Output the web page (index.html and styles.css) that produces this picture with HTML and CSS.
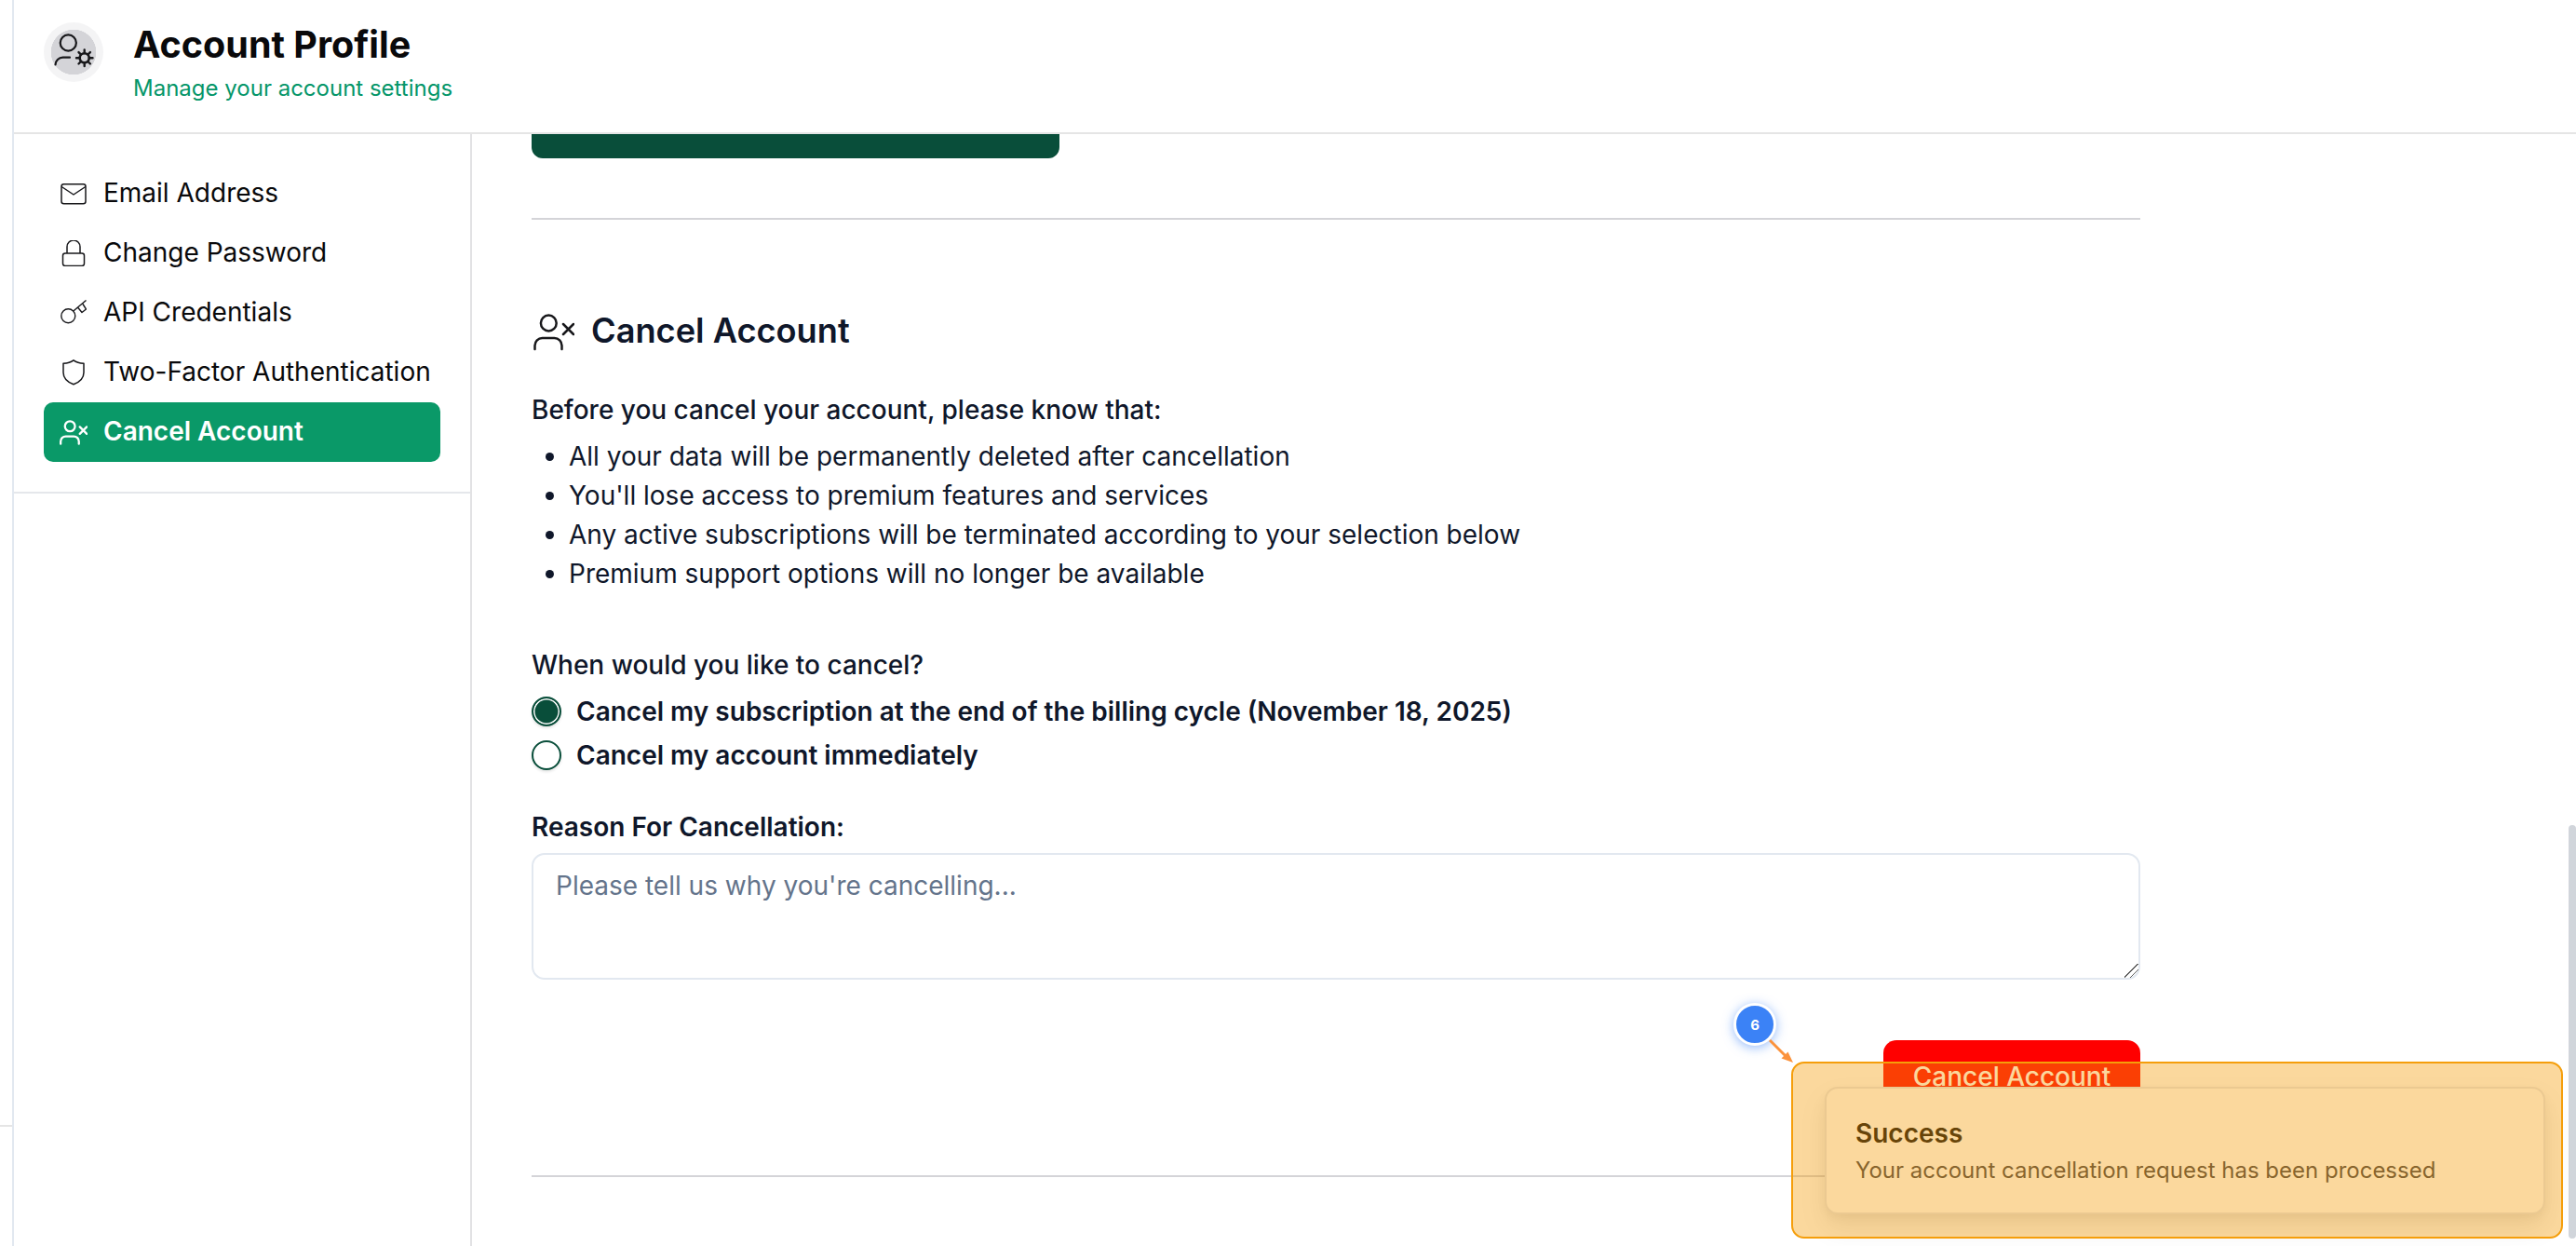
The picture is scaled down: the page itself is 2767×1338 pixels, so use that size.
FILE: index.html
```html
<!DOCTYPE html>
<html lang="en">
<head>
<meta charset="utf-8">
<title>Account Profile</title>
<link rel="stylesheet" href="styles.css">
</head>
<body>
<div class="page">
  <div class="rail"><div class="rail-line"></div></div>
  <div class="panel">
    <header class="header">
      <div class="avatar">
        <svg class="avatar-icon" viewBox="0 0 64 64" fill="none" stroke="#18181b" stroke-width="2.2" stroke-linecap="round">
          <circle cx="26.3" cy="22" r="8.6"/>
          <path d="M12.5 45.5a8 8 0 0 1 8-7.8H28"/>
          <circle cx="43.7" cy="38.3" r="5" stroke-width="2.6"/>
          <path d="M43.7 29.5v3.5M43.7 43.6v3.5M35 38.3h3.5M49 38.3h3.5M37.5 32.1l2.5 2.5M47.4 42l2.5 2.5M37.5 44.5l2.5-2.5M47.4 34.6l2.5-2.5" stroke-width="2.4"/>
        </svg>
      </div>
      <div class="titles">
        <h1 class="title">Account Profile</h1>
        <p class="subtitle">Manage your account settings</p>
      </div>
    </header>
    <div class="body">
      <aside class="sidebar">
        <nav class="nav">
          <a class="nav-item">
            <svg class="nav-icon" viewBox="0 0 28 28" fill="none" stroke="#18181b" stroke-width="1.5" stroke-linejoin="round"><rect x="1" y="3.75" width="26" height="21" rx="2.5"/><path d="M1.2 6.5 14 15 26.8 6.5"/></svg>
            <span>Email Address</span>
          </a>
          <a class="nav-item">
            <svg class="nav-icon" viewBox="0 0 28 28" fill="none" stroke="#18181b" stroke-width="1.5"><rect x="2.5" y="14" width="23" height="13.5" rx="2.5"/><path d="M7 14V7a7 7 0 0 1 14 0v7"/></svg>
            <span>Change Password</span>
          </a>
          <a class="nav-item">
            <svg class="nav-icon" viewBox="0 0 28 28" fill="none" stroke="#18181b" stroke-width="1.4" stroke-linejoin="round"><circle cx="8.3" cy="17.3" r="7.5"/><path d="M13.8 12 27.5 .5M18.5 8l4.5 5.5 4.5-3.5-3.5-5.5"/></svg>
            <span>API Credentials</span>
          </a>
          <a class="nav-item">
            <svg class="nav-icon" viewBox="0 0 28 28" fill="none" stroke="#18181b" stroke-width="1.5" stroke-linejoin="round"><path d="M14 .8C17 3 21 4 25 4.3V14C25 20 20 24.5 14 26.8 8 24.5 3 20 3 14V4.3C7 4 11 3 14 .8z"/></svg>
            <span>Two-Factor Authentication</span>
          </a>
          <a class="nav-item nav-item-active">
            <svg class="nav-icon nav-icon-wide" viewBox="0 0 44 40" fill="none" stroke="#fff" stroke-width="3.4" stroke-linecap="round"><circle cx="16.3" cy="10" r="8"/><path d="M1.5 38v-4a8 8 0 0 1 8-8h13a8 8 0 0 1 8 8v4"/><path d="M32 11l11 11M43 11 32 22"/></svg>
            <span>Cancel Account</span>
          </a>
        </nav>
      </aside>
      <main class="content">
        <button class="save-button" type="button"></button>
        <hr class="rule rule-top">
        <h2 class="section-title">
          <svg class="section-icon" viewBox="0 0 44 40" fill="none" stroke="#18181b" stroke-width="2.5" stroke-linecap="round"><circle cx="16.3" cy="10" r="8.4"/><path d="M1.5 38v-4a8 8 0 0 1 8-8h13a8 8 0 0 1 8 8v4"/><path d="M32 11l11 11M43 11 32 22"/></svg>
          <span>Cancel Account</span>
        </h2>
        <p class="lead">Before you cancel your account, please know that:</p>
        <ul class="points">
          <li>All your data will be permanently deleted after cancellation</li>
          <li>You'll lose access to premium features and services</li>
          <li>Any active subscriptions will be terminated according to your selection below</li>
          <li>Premium support options will no longer be available</li>
        </ul>
        <p class="lead lead-when">When would you like to cancel?</p>
        <div class="options">
          <label class="option"><input class="radio" type="radio" name="when" checked><span>Cancel my subscription at the end of the billing cycle (November 18, 2025)</span></label>
          <label class="option"><input class="radio" type="radio" name="when"><span>Cancel my account immediately</span></label>
        </div>
        <label class="reason-label" for="reason">Reason For Cancellation:</label>
        <textarea class="reason" id="reason" placeholder="Please tell us why you're cancelling..."></textarea>
        <div class="actions"><button class="cancel-button" type="button">Cancel Account</button></div>
        <hr class="rule">
      </main>
    </div>
  </div>
</div>

<div class="toast">
  <div class="toast-title">Success</div>
  <div class="toast-text">Your account cancellation request has been processed</div>
</div>
<div class="highlight"></div>
<div class="badge">6</div>
<svg class="pointer" viewBox="0 0 40 40" fill="none"><path d="M6 5 26 25" stroke="#fb923c" stroke-width="3"/><path d="M31 29 18.5 24.5 25.5 17.5z" fill="#fb923c"/></svg>
<div class="scroll-thumb"></div>
</body>
</html>
```
FILE: styles.css
```css
* { box-sizing: border-box; }
html, body { margin: 0; height: 100%; overflow: hidden; background: #fff; }
body { font-family: Inter, "Liberation Sans", sans-serif; color: #0f172a; position: relative; }

.page { display: flex; width: 2767px; height: 1338px; overflow: hidden; }
.rail { width: 13px; flex: none; padding-top: 1208px; }
.rail-line { height: 2px; background: #e5e5e5; }
.panel { flex: 1; display: flex; flex-direction: column; min-width: 0; border-left: 2px solid #e2e8f0; }

.header { height: 144px; flex: none; display: flex; align-items: flex-start; gap: 32px; padding: 24px 32px 0; border-bottom: 2px solid #e5e5e5; background: #fff; position: relative; z-index: 2; }
.avatar { width: 64px; height: 64px; border-radius: 50%; flex: none; position: relative; background: radial-gradient(circle at center, #d4d4d8 0 24px, #f4f4f5 24.5px); }
.avatar-icon { width: 64px; height: 64px; display: block; }
.titles { display: flex; flex-direction: column; }
.title { margin: 0; font-size: 39.5px; line-height: 48px; font-weight: 700; color: #09090b; }
.subtitle { margin: 0; padding-top: 11px; font-size: 24px; line-height: 24px; color: #059669; }

.body { flex: 1; display: flex; min-height: 0; }
.sidebar { width: 492px; flex: none; border-right: 2px solid #e2e2e4; }
.nav { display: flex; flex-direction: column; padding: 32px 32px 32px; border-bottom: 2px solid #e5e7eb; }
.nav-item { height: 64px; display: flex; align-items: center; gap: 18px; padding-left: 18px; font-size: 28px; font-weight: 400; color: #09090b; border-radius: 10px; }
.nav-item span { position: relative; top: -1px; }
.nav-icon { width: 28px; height: 28px; flex: none; }
.nav-icon-wide { width: 30px; height: 27px; margin: 0 -1px; }
.nav-item-active { background: #0a9968; color: #fff; font-weight: 600; }

.content { flex: 1; min-width: 0; padding: 0 0 0 64px; overflow: hidden; }
.content > * { width: 1728px; }
.save-button { display: block; width: 567px; height: 63px; margin-top: -37px; background: #094e3a; border: 0; border-radius: 12px; }
.rule { height: 2px; margin: 0; border: 0; background: #d4d4d8; }
.rule-top { margin-top: 64px; }
.section-title { display: flex; align-items: center; gap: 18px; height: 42px; margin: 98px 0 0; font-size: 36.2px; font-weight: 600; color: #0f172a; }
.section-icon { width: 44px; height: 40px; flex: none; margin-left: 2px; margin-top: 3px; }
.lead { margin: 43px 0 0; font-size: 28px; line-height: 42px; font-weight: 500; }
.points { margin: 8px 0 0; padding: 0 0 0 40px; font-size: 28px; line-height: 42px; }
.lead-when { margin-top: 56px; }
.options { display: flex; flex-direction: column; gap: 5px; margin-top: 8px; }
.option { display: flex; align-items: center; gap: 16px; height: 42px; font-size: 28px; font-weight: 600; }
.radio { appearance: none; width: 32px; height: 32px; margin: 0; flex: none; border: 2px solid #094e3a; border-radius: 50%; background: #fff; box-shadow: 0 2px 3px rgba(0,0,0,.1); }
.radio:checked { background: #094e3a; box-shadow: inset 0 0 0 1.5px #fff, 0 2px 3px rgba(0,0,0,.1); }
.reason-label { display: block; margin-top: 35px; font-size: 28px; line-height: 42px; font-weight: 600; }
.reason { display: block; width: 1728px; height: 136px; margin-top: 7px; padding: 12px 24px; border: 2px solid #e2e8f0; border-radius: 14px; font: 400 28px/42px Inter, "Liberation Sans", sans-serif; color: #0f172a; background: #fff; outline: none; }
.reason::placeholder { color: #64748b; opacity: 1; }
.reason::-webkit-resizer { background: linear-gradient(135deg, transparent 0 46%, #5f5f5f 46% 51%, transparent 51% 68%, #5f5f5f 68% 73%, transparent 73%); }
.actions { display: flex; justify-content: flex-end; margin-top: 65px; }
.cancel-button { width: 276px; height: 77px; background: #f00; color: #fff; border: 0; border-radius: 14px; font: 500 28px Inter, "Liberation Sans", sans-serif; }
.content > .rule:last-child { margin-top: 68px; }

.toast { position: absolute; left: 1960px; top: 1167px; width: 774px; height: 137px; padding: 30px 31px; background: #fff; border: 2px solid #e5e7eb; border-radius: 14px; box-shadow: 0 14px 28px rgba(0,0,0,.1), 0 4px 10px rgba(0,0,0,.05); z-index: 5; }
.toast-title { font-size: 28px; line-height: 36px; font-weight: 600; color: #09090b; }
.toast-text { margin-top: 6px; font-size: 24px; line-height: 32px; color: #3f3f46; }
.highlight { position: absolute; left: 1924px; top: 1140px; width: 829px; height: 190px; border: 2px solid #f59e0b; border-radius: 14px; background: rgba(245,158,11,.4); z-index: 6; }
.badge { position: absolute; left: 1862px; top: 1077px; width: 46px; height: 46px; display: flex; align-items: center; justify-content: center; border: 3px solid #fff; border-radius: 50%; background: #3b82f6; color: #fff; font-size: 15px; font-weight: 700; box-shadow: 0 2px 12px rgba(59,130,246,.55); z-index: 7; }
.pointer { position: absolute; left: 1895px; top: 1112px; width: 40px; height: 40px; z-index: 7; }
.scroll-thumb { position: absolute; left: 2759px; top: 886px; width: 8px; height: 444px; border-radius: 4px; background: #d1d5db; z-index: 4; }
```
